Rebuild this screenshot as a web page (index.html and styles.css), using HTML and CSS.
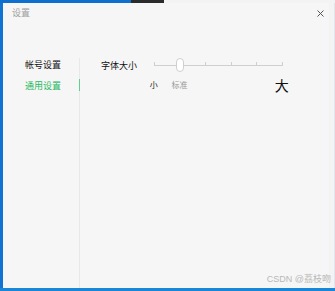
FILE: index.html
```html
<!DOCTYPE html>
<html lang="zh-CN">
<head>
    <meta charset="UTF-8">
    <meta name="viewport" content="width=device-width, initial-scale=1.0">
    <title>设置</title>
    <link rel="stylesheet" href="styles.css">
</head>
<body>
    <div class="screen">
        <div class="topbar">
            <div class="seg seg-blue"></div>
            <div class="seg seg-dark"></div>
            <div class="seg seg-light"></div>
        </div>
        <div class="main">
            <div class="edge-left"></div>
            <div class="dialog">
                <div class="titlebar">
                    <span class="title">设置</span>
                    <svg class="close" width="7" height="7" viewBox="0 0 7 7">
                        <path d="M0.5 0.5 L6.5 6.5 M6.5 0.5 L0.5 6.5" stroke="#555" stroke-width="1" fill="none"/>
                    </svg>
                </div>
                <div class="body">
                    <div class="sidebar">
                        <div class="nav-item">帐号设置</div>
                        <div class="nav-item active">通用设置</div>
                    </div>
                    <div class="content">
                        <div class="setting-row">
                            <div class="setting-label">字体大小</div>
                            <div class="slider">
                                <div class="track">
                                    <span class="tick"></span>
                                    <span class="tick"></span>
                                    <span class="tick"></span>
                                    <span class="tick"></span>
                                    <span class="tick"></span>
                                    <span class="tick"></span>
                                </div>
                                <div class="handle"></div>
                            </div>
                        </div>
                        <div class="scale-labels">
                            <span class="lbl small">小</span>
                            <span class="lbl normal">标准</span>
                            <span></span>
                            <span></span>
                            <span></span>
                            <span class="lbl big">大</span>
                        </div>
                    </div>
                </div>
            </div>
            <div class="edge-right"></div>
        </div>
        <div class="bottombar"></div>
        <div class="watermark">CSDN @荔枝吻</div>
    </div>
</body>
</html>
```

FILE: styles.css
```css
* {
    box-sizing: border-box;
}

body {
    margin: 0;
    font-family: "Noto Sans CJK SC", "Noto Sans", sans-serif;
}

.screen {
    position: relative;
    width: 335px;
    height: 291px;
    display: flex;
    flex-direction: column;
    background-color: #f0f0f0;
    overflow: hidden;
}

.topbar {
    display: flex;
    height: 3px;
}

.seg-blue {
    width: 131px;
    background-color: #0f6fcf;
}

.seg-dark {
    width: 33px;
    background-color: #2b2b2b;
}

.seg-light {
    flex: 1;
    background-color: #f3f3f3;
}

.main {
    flex: 1;
    display: flex;
}

.edge-left {
    width: 3px;
    background-color: #1274d2;
}

.edge-right {
    width: 6px;
    background-color: #f3f3f3;
    border-right: 1px solid #e2e6ea;
}

.bottombar {
    height: 3px;
    background-color: #1a86d8;
}

.dialog {
    flex: 1;
    display: flex;
    flex-direction: column;
    background-color: #f6f6f6;
}

.titlebar {
    height: 20px;
    display: flex;
    align-items: center;
    justify-content: space-between;
    padding: 0 5px 0 9px;
}

.title {
    font-size: 9px;
    color: #a0a0a0;
    line-height: 20px;
}

.close {
    display: block;
}

.body {
    flex: 1;
    display: flex;
    margin-top: 35px;
}

.sidebar {
    width: 77px;
    border-right: 1px solid #e8e8e8;
    display: flex;
    flex-direction: column;
    gap: 7px;
}

.nav-item {
    position: relative;
    height: 14px;
    line-height: 14px;
    font-size: 9px;
    color: #111;
    padding-left: 22px;
}

.nav-item.active {
    color: #1fb960;
}

.nav-item.active::after {
    content: "";
    position: absolute;
    right: -1px;
    top: 0;
    width: 1px;
    height: 12px;
    background-color: #5fd08d;
}

.content {
    flex: 1;
    padding-left: 21px;
    display: flex;
    flex-direction: column;
    gap: 5px;
}

.setting-row {
    display: flex;
    align-items: center;
    height: 14px;
}

.setting-label {
    width: 53px;
    font-size: 9px;
    color: #111;
}

.slider {
    position: relative;
    width: 129px;
    height: 14px;
    display: flex;
    align-items: center;
}

.track {
    width: 100%;
    height: 1px;
    background-color: #cfcfcf;
    display: flex;
    justify-content: space-between;
    align-items: flex-end;
}

.tick {
    width: 1px;
    height: 4px;
    background-color: #cfcfcf;
}

.handle {
    position: absolute;
    left: 22px;
    top: 0;
    width: 8px;
    height: 14px;
    background-color: #fff;
    border: 1px solid #cfcfcf;
    border-radius: 4px;
}

.scale-labels {
    display: grid;
    grid-template-columns: repeat(6, 25.6px);
    align-items: center;
    height: 16px;
    margin-left: 40px;
}

.lbl {
    text-align: center;
    line-height: 16px;
}

.small {
    font-size: 8px;
    color: #222;
}

.normal {
    font-size: 8px;
    color: #999;
}

.big {
    font-size: 14px;
    color: #111;
}

.watermark {
    position: absolute;
    right: 4px;
    bottom: 6px;
    font-size: 9px;
    color: #b8b8b8;
    font-family: "Liberation Sans", "Noto Sans CJK SC", sans-serif;
}
```
